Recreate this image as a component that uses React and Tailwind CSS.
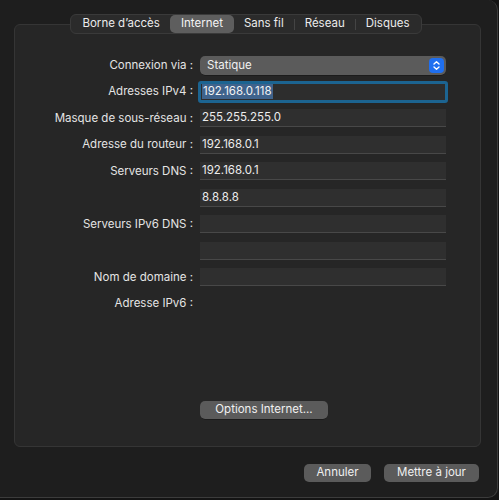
import React from 'react';

const font = { fontFamily: 'Inter, "Liberation Sans", sans-serif' };

const tabs = ['Borne d’accès', 'Internet', 'Sans fil', 'Réseau', 'Disques'];

const rows = [
  { label: 'Connexion via :', kind: 'popup', value: 'Statique' },
  { label: 'Adresses IPv4 :', kind: 'focus', value: '192.168.0.118' },
  { label: 'Masque de sous-réseau :', kind: 'field', value: '255.255.255.0' },
  { label: 'Adresse du routeur :', kind: 'field', value: '192.168.0.1' },
  { label: 'Serveurs DNS :', kind: 'field', value: '192.168.0.1' },
  { label: '', kind: 'field', value: '8.8.8.8' },
  { label: 'Serveurs IPv6 DNS :', kind: 'field', value: '' },
  { label: '', kind: 'field', value: '' },
  { label: 'Nom de domaine :', kind: 'field', value: '' },
  { label: 'Adresse IPv6 :', kind: 'none', value: '' },
];

function Field({ kind, value }) {
  if (kind === 'popup') {
    return (
      <div className="flex h-[19px] w-[246px] items-center justify-between rounded-[5px] bg-[#5b5b5b] pl-[7px] pr-[2px] shadow-[0_0.5px_0_rgba(0,0,0,0.5)]">
        <span className="text-[#f0f0f0]">{value}</span>
        <span className="flex h-[15px] w-[15px] items-center justify-center rounded-[4px] bg-[#1f6ff0]">
          <svg width="9" height="11" viewBox="0 0 9 11" fill="none" stroke="white" strokeWidth="1.4" strokeLinecap="round" strokeLinejoin="round">
            <path d="M2 4 L4.5 1.8 L7 4" />
            <path d="M2 7 L4.5 9.2 L7 7" />
          </svg>
        </span>
      </div>
    );
  }
  if (kind === 'focus') {
    return (
      <div className="-ml-[2px] flex h-[22px] w-[250px] items-center rounded-[3px] border-[3px] border-[#1c6491] bg-[#2d2d2d] pl-[1px]">
        <span className="bg-[#3f638c] px-[1px] leading-[15px] text-[#f4f4f4]">{value}</span>
      </div>
    );
  }
  if (kind === 'field') {
    return (
      <div className="flex h-[18px] w-[246px] items-center border-b border-[#484848] bg-[#2f2f2f] pl-[2px] text-[#ededed]">
        {value}
      </div>
    );
  }
  return null;
}

export default function App() {
  return (
    <div className="h-[500px] w-[499px] bg-[#141414] text-[11.5px]" style={font}>
      <div className="relative flex h-[498px] w-[498px] flex-col rounded-r-[10px] border-r border-b border-[#3c3c3c] bg-[#1e1e1e] px-[14px] pt-[14px]">
        <div className="relative h-[433px] w-[467px]">
          <div className="absolute inset-x-0 bottom-0 top-[10px] rounded-[6px] border border-[#353535] bg-[#262626]" />
          <div className="relative flex justify-center">
            <div className="ml-[-3px] flex h-[20px] items-center rounded-[6px] border border-[#3a3a3a] bg-[#2b2b2b] px-[1px] text-[#ececec]">
              {tabs.map((t, i) => (
                <React.Fragment key={t}>
                  {i > 2 && <span className="h-[11px] w-px bg-[#444]" />}
                  <span
                    className={
                      t === 'Internet'
                        ? 'flex h-[18px] items-center rounded-[5px] bg-[#5e5e5e] px-[11px] text-[#f4f4f4]'
                        : 'flex h-[18px] items-center px-[10px]'
                    }
                  >
                    {t}
                  </span>
                </React.Fragment>
              ))}
            </div>
          </div>
          <div className="relative mt-[18px] flex flex-col">
            {rows.map((r, i) => (
              <div key={i} className="flex h-[26.5px] items-center">
                <div className="w-[186px] pr-[7px] text-right text-[#e4e4e4]">{r.label}</div>
                <Field kind={r.kind} value={r.value} />
              </div>
            ))}
          </div>
          <div className="relative mt-[84px] pl-[186px]">
            <button className="h-[18px] w-[128px] rounded-[5px] bg-[#5b5b5b] text-[#f0f0f0] shadow-[0_0.5px_0_rgba(0,0,0,0.5)]">
              Options Internet...
            </button>
          </div>
        </div>
        <div className="mt-[17px] flex justify-end gap-[13px] pr-[4px]">
          <button className="h-[18px] w-[67px] rounded-[5px] bg-[#5b5b5b] text-[#f0f0f0]">Annuler</button>
          <button className="h-[18px] w-[95px] rounded-[5px] bg-[#5b5b5b] text-[#f0f0f0]">Mettre à jour</button>
        </div>
      </div>
    </div>
  );
}
